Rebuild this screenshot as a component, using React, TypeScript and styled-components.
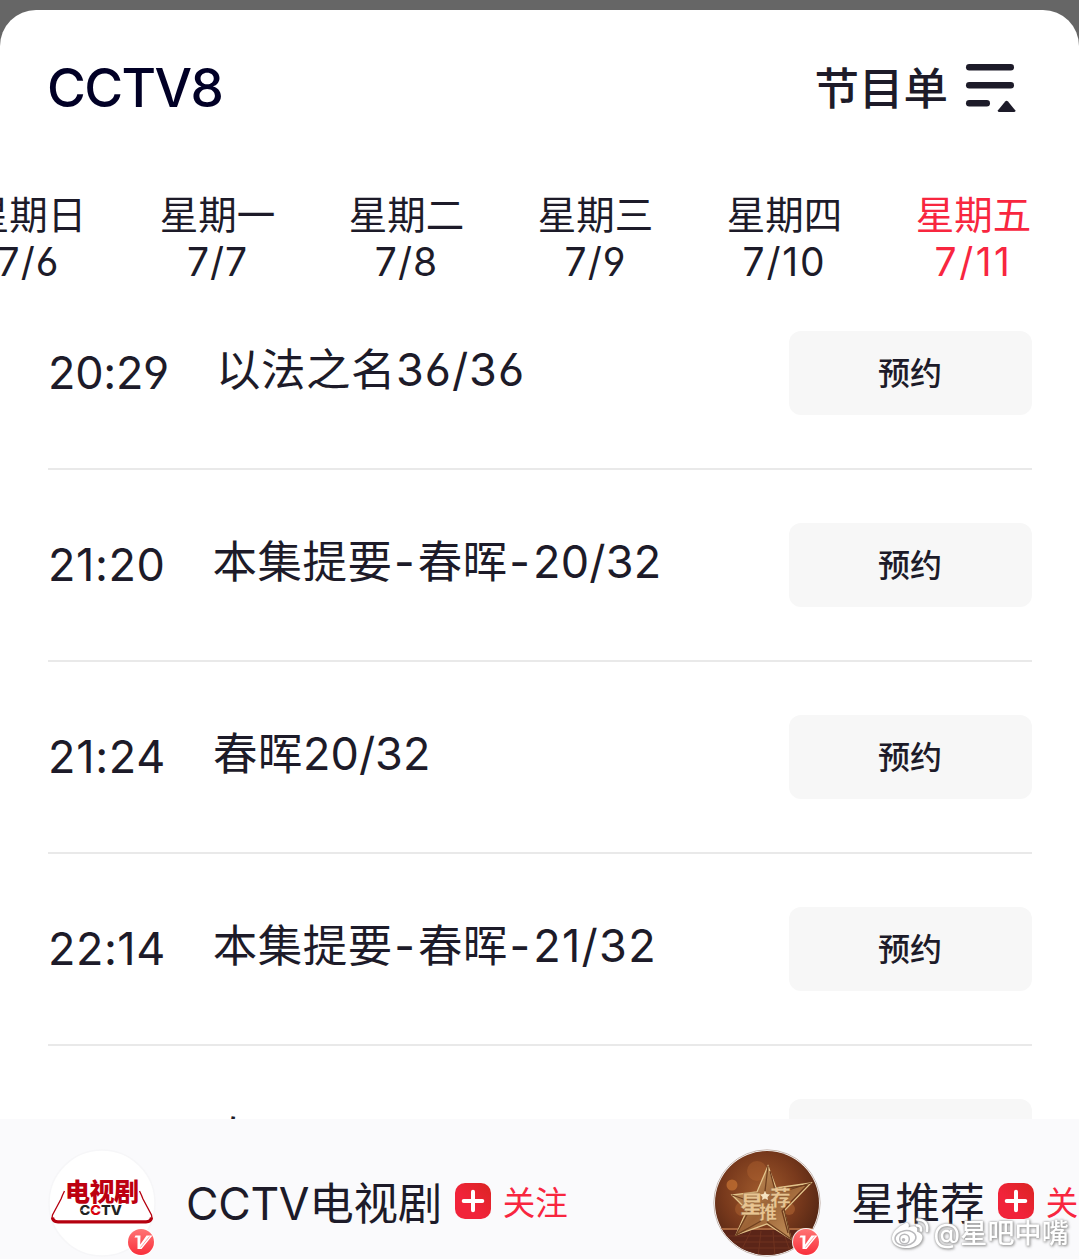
import React from "react";
import styled, { createGlobalStyle, css } from "styled-components";

const GlobalStyle = createGlobalStyle`
  body {
    margin: 0;
    background-color: #666;
    color: #1d1b29;
    font-family: Inter, "Noto Sans CJK SC", sans-serif;
    font-feature-settings: "cv03", "cv04";
    overflow: hidden;
  }

  * {
    box-sizing: border-box;
  }
`;

const days = [
  { name: "星期日", date: "7/6", spacing: 1 },
  { name: "星期一", date: "7/7", spacing: 1 },
  { name: "星期二", date: "7/8", spacing: 1 },
  { name: "星期三", date: "7/9", spacing: 1 },
  { name: "星期四", date: "7/10", spacing: 1.8 },
  { name: "星期五", date: "7/11", spacing: 2.5, active: true },
];

const programs = [
  { time: "20:29", title: "以法之名36/36", timeSpacing: -0.3, spacing: 1 },
  { time: "21:20", title: "本集提要-春晖-20/32", timeSpacing: 0.6, spacing: 0.2 },
  { time: "21:24", title: "春晖20/32", timeSpacing: 0.7, spacing: 0 },
  { time: "22:14", title: "本集提要-春晖-21/32", timeSpacing: 0.5, spacing: 1.3 },
  { time: "22:18", title: "春晖21/32", timeSpacing: 0.5, spacing: 1.3 },
];

const MenuIcon = () => (
  <svg width="52" height="52" viewBox="0 0 52 52" fill="#1d1b29">
    <rect x="1" y="2" width="48" height="6.4" rx="3.2" />
    <rect x="1" y="20" width="48" height="6.4" rx="3.2" />
    <rect x="1" y="38" width="24" height="6.4" rx="3.2" />
    <path d="M33 48.2L40.2 39.6Q41.6 38 43 39.6L50.2 48.2Q51 50 49.2 50H34Q32.2 50 33 48.2Z" />
  </svg>
);

const PlusIcon = () => (
  <svg width="36" height="36" viewBox="0 0 36 36">
    <defs>
      <linearGradient id="plus" x1="0" y1="1" x2="1" y2="0">
        <stop offset="0.4" stopColor="#f1233a" />
        <stop offset="1" stopColor="#da2422" />
      </linearGradient>
    </defs>
    <rect width="36" height="36" rx="10" fill="url(#plus)" />
    <path d="M8.7 18H27.3M18 8.7V27.3" stroke="#fff" strokeWidth="4" strokeLinecap="round" />
  </svg>
);

const VerifiedIcon = () => (
  <svg width="28" height="28" viewBox="0 0 28 28">
    <defs>
      <linearGradient id="verified" x1="0" y1="0" x2="0" y2="1">
        <stop offset="0" stopColor="#ff7474" />
        <stop offset="1" stopColor="#f92f3b" />
      </linearGradient>
    </defs>
    <circle cx="14" cy="14" r="14" fill="#fff" fillOpacity="0.9" />
    <circle cx="14" cy="14" r="13" fill="url(#verified)" />
    <path d="M8.5 7.500H13.5L13.2 16.500L19.5 7.500H25.500L14.500 21H10.500L10.500 9.500H7.500Z" fill="#fff" />
    <path d="M22.500 8.500L13.500 19.500" stroke="#f88" strokeWidth="0.8" />
  </svg>
);

const DramaLogo = () => (
  <svg width="108" height="108" viewBox="0 0 108 108">
    <circle cx="54" cy="54" r="53" fill="#fff" stroke="#f6f6f8" strokeWidth="1.5" />
    <path
      d="M16.5 42Q14.5 46 13 50L4.5 66Q2.5 73 9 73H99Q105.5 73 103.5 66L95 50Q93.5 46 91.5 42"
      fill="none"
      stroke="#b5000f"
      strokeWidth="1.3"
    />
    <path d="M4.5 68.5Q5 72.8 10 72.8H98Q103 72.8 103.5 68.5" fill="none" stroke="#b5000f" strokeWidth="3.2" />
    <LogoText x="17" y="51.5" textLength="74" $size={25} fill="#bd0010">
      电视剧
    </LogoText>
    <LatinLogo x="31.5" y="66.3" textLength="42.5" lengthAdjust="spacingAndGlyphs">
      <tspan fill="#222">C</tspan>
      <tspan fill="#d7000f">C</tspan>
      <tspan fill="#222">TV</tspan>
    </LatinLogo>
    <path d="M33 61.3H41M44 61.3H52" stroke="#fff" strokeWidth="0.7" />
  </svg>
);

const StarLogo = () => (
  <svg width="108" height="108" viewBox="0 0 108 108">
    <defs>
      <radialGradient id="stage" cx="0.45" cy="0.4" r="0.65">
        <stop offset="0" stopColor="#a05a2c" />
        <stop offset="0.55" stopColor="#78391c" />
        <stop offset="1" stopColor="#4a2112" />
      </radialGradient>
      <linearGradient id="gold" x1="0" y1="0" x2="1" y2="1">
        <stop offset="0" stopColor="#cfa269" />
        <stop offset="0.5" stopColor="#9c6336" />
        <stop offset="1" stopColor="#d0a066" />
      </linearGradient>
      <clipPath id="round">
        <circle cx="54" cy="54" r="52" />
      </clipPath>
    </defs>
    <circle cx="54" cy="54" r="53.2" fill="#fff" stroke="#b7a49c" strokeWidth="0.8" />
    <g clipPath="url(#round)">
      <rect width="108" height="108" fill="url(#stage)" />
      <circle cx="19" cy="36" r="5.5" fill="#c87333" opacity="0.7" />
      <circle cx="44" cy="22" r="10" fill="#b96b35" opacity="0.35" />
      <circle cx="76" cy="60" r="6" fill="#b96b35" opacity="0.5" />
      <circle cx="29" cy="60" r="7" fill="#b96b35" opacity="0.4" />
      <rect y="79" width="108" height="30" fill="#5b2518" />
      <path d="M0 80H108" stroke="#c07b4a" strokeWidth="1.6" />
      <path
        d="M0 87H108M0 93H108M0 99H108M25 108L38 82M45 108L48 82M62 108L60 82M79 108L70 82"
        stroke="#70331f"
        strokeWidth="1"
      />
      <path
        d="M55 17L63 39L98 34L71 62L78 90L54 75L23 86L34 61L19 46L44 43Z"
        fill="url(#gold)"
        stroke="#e2c48c"
        strokeWidth="1.3"
      />
      <path
        d="M55 17L52 42M71 60L78 90L54 73M48 72L23 86L36 62M36 52L19 46M72 42L98 34"
        fill="none"
        stroke="#70401f"
        strokeWidth="1.3"
      />
      <path d="M57 22L62 41L94 36L69 62L75 84" fill="none" stroke="#6d3b1d" strokeWidth="1.2" />
    </g>
    <LogoText x="27" y="64" $size={24} fill="#e8c592" stroke="#8d5a30">
      星
    </LogoText>
    <LogoText x="46" y="70" $size={18} fill="#e8c592" stroke="#8d5a30">
      推
    </LogoText>
    <LogoText x="57" y="55.5" $size={21} fill="#e8c592" stroke="#8d5a30">
      荐
    </LogoText>
    <path d="M52 42L53.5 45L57 45.5L54.5 48L55 51L52 49.5L49 51L49.5 48L47 45.5L50.5 45Z" fill="#f5e2c0" />
  </svg>
);

const WeiboIcon = () => (
  <svg width="40" height="34" viewBox="0 0 40 34">
    <path
      d="M14 7C17 5 20 6.5 18.5 10.5C24 8 28.5 9.5 27 14.5C31.5 16 33.5 19 32 22.5C30 28.5 22.5 31.5 15 31C7 30.5 1.5 26.5 2 20.5C2.5 15 8 10 14 7Z"
      fill="#fff"
    />
    <ellipse cx="15.5" cy="21" rx="10.5" ry="7.3" transform="rotate(-8 15.5 21)" fill="none" stroke="#b9b9bc" strokeWidth="1.5" />
    <circle cx="14.5" cy="22" r="4.8" fill="none" stroke="#b9b9bc" strokeWidth="1.5" />
    <circle cx="13.5" cy="22.8" r="1.8" fill="#b9b9bc" />
    <path
      d="M27 8.5Q31.5 8.5 31 13.5M27.5 2.5Q38.500 3 37 14"
      fill="none"
      stroke="#fff"
      strokeWidth="2.6"
      strokeLinecap="round"
    />
  </svg>
);

interface AccountProps {
  name: string;
  logo: React.ReactNode;
  spacing: number;
  width?: number;
}

const Account = (props: AccountProps) => (
  <AccountWrapper $width={props.width}>
    <Avatar>
      {props.logo}
      <Badge>
        <VerifiedIcon />
      </Badge>
    </Avatar>
    <AccountName $spacing={props.spacing}>{props.name}</AccountName>
    <Follow>
      <PlusIcon />
      <FollowText>关注</FollowText>
    </Follow>
  </AccountWrapper>
);

interface ProgramTitleProps {
  text: string;
  spacing: number;
}

const ProgramTitle = (props: ProgramTitleProps) => (
  <Title>
    {props.text.split(/(-|[\d/]+)/).map((part, i) => {
      if (part === "-") {
        return <Hyphen key={i}>-</Hyphen>;
      }
      if (/\d/.test(part)) {
        return (
          <Episode key={i} $spacing={props.spacing}>
            {part}
          </Episode>
        );
      }
      return part;
    })}
  </Title>
);

export default () => {
  return (
    <Screen>
      <GlobalStyle />
      <Sheet>
        <Header>
          <Channel>CCTV8</Channel>
          <GuideButton>
            <GuideText>节目单</GuideText>
            <MenuIcon />
          </GuideButton>
        </Header>
        <Days>
          {days.map((day) => (
            <Day key={day.date} $active={day.active}>
              <DayName>{day.name}</DayName>
              <DayDate $spacing={day.spacing}>{day.date}</DayDate>
            </Day>
          ))}
        </Days>
        <ProgramList>
          {programs.map((program) => (
            <Program key={program.time}>
              <Time $spacing={program.timeSpacing}>{program.time}</Time>
              <ProgramTitle text={program.title} spacing={program.spacing} />
              <Reserve>预约</Reserve>
            </Program>
          ))}
        </ProgramList>
        <Footer>
          <Account name="CCTV电视剧" logo={<DramaLogo />} spacing={-0.3} width={665} />
          <Account name="星推荐" logo={<StarLogo />} spacing={0.1} />
          <Watermark>
            <WeiboIcon />
            @星吧中嘴
          </Watermark>
        </Footer>
      </Sheet>
    </Screen>
  );
};

const Screen = styled.div`
  height: 1259px;
  padding-top: 10px;
  background-color: #666;
`;

const Sheet = styled.main`
  height: 1249px;
  display: flex;
  flex-direction: column;
  overflow: hidden;
  border-radius: 36px 36px 0 0;
  background-color: #fff;
`;

const Header = styled.header`
  height: 181px;
  flex-shrink: 0;
  display: flex;
  justify-content: space-between;
  align-items: flex-start;
  padding: 42px 62px 0 47px;
`;

const Channel = styled.h1`
  margin: 0;
  color: #010026;
  font-size: 53px;
  font-weight: 500;
  line-height: 73px;
  letter-spacing: -1.6px;
`;

const GuideButton = styled.div`
  display: flex;
  align-items: center;
  gap: 17px;
  height: 72px;
`;

const GuideText = styled.span`
  padding-top: 2px;
  font-size: 44.5px;
  font-weight: 500;
  line-height: 72px;
`;

const Days = styled.nav`
  height: 87px;
  flex-shrink: 0;
  display: flex;
  justify-content: flex-end;
  padding-right: 11px;
`;

const Day = styled.div<{ $active?: boolean }>`
  width: 189px;
  flex-shrink: 0;
  text-align: center;

  ${(props) =>
    props.$active &&
    css`
      color: #f8263f;
    `}
`;

const DayName = styled.div`
  font-size: 38.5px;
  line-height: 48px;
`;

const DayDate = styled.div<{ $spacing: number }>`
  font-size: 39px;
  line-height: 45px;
  letter-spacing: ${(props) => props.$spacing}px;
`;

const ProgramList = styled.div`
  height: 841px;
  flex-shrink: 0;
  overflow: hidden;
  padding: 0 47px 0 48px;
`;

const Program = styled.div`
  height: 192px;
  display: flex;
  align-items: flex-start;
  padding-top: 53px;
  border-bottom: 2px solid #e9e9e9;
`;

const Time = styled.div<{ $spacing: number }>`
  margin-right: 47px;
  font-size: 45px;
  line-height: 84px;
  letter-spacing: ${(props) => props.$spacing}px;
`;

const Title = styled.div`
  flex: 1;
  font-size: 44.5px;
  line-height: 78px;
  letter-spacing: 0.5px;
  white-space: nowrap;
`;

const Episode = styled.span<{ $spacing: number }>`
  font-size: 45px;
  letter-spacing: ${(props) => props.$spacing}px;
`;

const Hyphen = styled.span`
  padding: 0 3px 0 1.5px;
  font-size: 45px;
  letter-spacing: 0;
`;

const Reserve = styled.button`
  width: 243px;
  height: 84px;
  padding: 0 1px 4px 0;
  border: none;
  border-radius: 12px;
  background-color: #f7f7f7;
  color: #1d1b29;
  font-family: inherit;
  font-size: 32px;
  font-weight: 500;
`;

const Footer = styled.footer`
  position: relative;
  height: 140px;
  flex-shrink: 0;
  display: flex;
  padding: 30px 0 0 48px;
  overflow: hidden;
  background-color: #fafafc;
`;

const AccountWrapper = styled.div<{ $width?: number }>`
  width: ${(props) => (props.$width ? `${props.$width}px` : "auto")};
  height: 108px;
  flex-shrink: 0;
  display: flex;
  align-items: center;
`;

const Avatar = styled.div`
  position: relative;
  width: 108px;
  height: 108px;
  margin-right: 30px;
`;

const Badge = styled.span`
  position: absolute;
  right: 1px;
  bottom: 1px;
  height: 28px;
`;

const AccountName = styled.span<{ $spacing: number }>`
  margin-right: 13px;
  padding-top: 1px;
  font-size: 44.5px;
  line-height: 72px;
  letter-spacing: ${(props) => props.$spacing}px;
  white-space: nowrap;
`;

const Follow = styled.span`
  display: flex;
  align-items: center;
  gap: 12px;
  padding-bottom: 4px;
  color: #f8263f;
  font-size: 32.5px;
  line-height: 48px;
  white-space: nowrap;
`;

const FollowText = styled.span`
  padding-top: 5px;
`;

const LogoText = styled.text<{ $size: number }>`
  font-family: "Noto Sans CJK SC", sans-serif;
  font-size: ${(props) => props.$size}px;
  font-weight: 900;
  stroke-width: 0.4px;
`;

const LatinLogo = styled.text`
  font-family: Inter, sans-serif;
  font-size: 13.5px;
  font-weight: 800;
`;

const Watermark = styled.div`
  position: absolute;
  right: 10px;
  bottom: 8px;
  display: flex;
  align-items: center;
  gap: 3px;
  color: #fff;
  font-size: 27px;
  font-weight: 500;
  line-height: 34px;
  letter-spacing: 0.2px;
  filter: drop-shadow(0 0 1px #999) drop-shadow(1px 1px 1px #aaa);
`;
